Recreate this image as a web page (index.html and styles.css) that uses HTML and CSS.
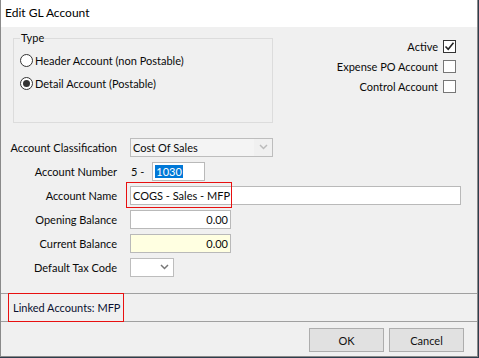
FILE: index.html
```html
<!DOCTYPE html>
<html>
<head>
<meta charset="utf-8">
<link rel="stylesheet" href="styles.css">
</head>
<body>
<div class="window">
  <div class="titlebar">Edit GL Account</div>
  <div class="top">
    <fieldset class="group">
      <legend>Type</legend>
      <label class="radio-row"><span class="radio"></span>Header Account (non Postable)</label>
      <label class="radio-row"><span class="radio checked"></span>Detail Account (Postable)</label>
    </fieldset>
    <div class="checks">
      <div class="check-row">Active<span class="check on"><svg width="11" height="11" viewBox="0 0 11 11"><path d="M1.5 5.5 L4.2 8.2 L9.5 1.8" fill="none" stroke="#222" stroke-width="1.6"/></svg></span></div>
      <div class="check-row">Expense PO Account<span class="check"></span></div>
      <div class="check-row">Control Account<span class="check"></span></div>
    </div>
  </div>
  <div class="form">
    <div class="row">
      <div class="lbl">Account Classification</div>
      <div class="select wide"><span class="sel-text">Cost Of Sales</span><span class="sel-arrow dim"><svg width="9" height="6" viewBox="0 0 9 6"><path d="M1 1 L4.5 4.5 L8 1" fill="none" stroke="#bbb" stroke-width="1.5"/></svg></span></div>
    </div>
    <div class="row">
      <div class="lbl">Account Number</div>
      <span class="prefix">5 -</span>
      <div class="input num"><span class="hl">1030</span></div>
    </div>
    <div class="row">
      <div class="lbl">Account Name</div>
      <div class="name-wrap">
        <div class="input name">COGS - Sales - MFP</div>
        <div class="red-box name-box"></div>
      </div>
    </div>
    <div class="row">
      <div class="lbl">Opening Balance</div>
      <div class="input money">0.00</div>
    </div>
    <div class="row">
      <div class="lbl">Current Balance</div>
      <div class="input money yellow">0.00</div>
    </div>
    <div class="row">
      <div class="lbl">Default Tax Code</div>
      <div class="select small"><span class="sel-text"></span><span class="sel-arrow"><svg width="9" height="6" viewBox="0 0 9 6"><path d="M1 1 L4.5 4.5 L8 1" fill="none" stroke="#777" stroke-width="1.5"/></svg></span></div>
    </div>
  </div>
  <div class="status">
    <div class="linked">Linked Accounts: MFP</div>
  </div>
  <div class="buttons">
    <button class="btn">OK</button>
    <button class="btn">Cancel</button>
  </div>
</div>
</body>
</html>
```

FILE: styles.css
```css
* { box-sizing: border-box; }
html, body { margin: 0; padding: 0; }
body {
  background: #2e3d4c;
  width: 479px;
  height: 358px;
  overflow: hidden;
  font-family: Lato, "Noto Sans", sans-serif;
  font-size: 11px;
  color: #0a0a0a;
  white-space: nowrap;
}
.window {
  width: 478px;
  height: 357px;
  background: #f0f0f0;
  border: 1px solid #8a8a8a;
  border-top: none;
  display: flex;
  flex-direction: column;
}
.titlebar {
  height: 27px;
  background: #fff;
  font-size: 12px;
  line-height: 26px;
  padding-left: 4px;
  color: #000;
  flex: none;
}
.top {
  display: flex;
  justify-content: space-between;
  padding-top: 4px;
  height: 107px;
  flex: none;
}
.group {
  margin: 0 0 0 12px;
  padding: 4px 0 0 6px;
  width: 260px;
  height: 92px;
  border: 1px solid #dcdcdc;
  min-width: 0;
}
.group legend {
  padding: 0 1px;
  margin-left: 0;
  font-size: 11px;
  line-height: 14px;
}
.radio-row {
  display: flex;
  align-items: center;
  height: 23px;
  gap: 2px;
}
.radio {
  width: 13px;
  height: 13px;
  border: 1px solid #333;
  border-radius: 50%;
  background: #fff;
  display: flex;
  align-items: center;
  justify-content: center;
  flex: none;
}
.radio.checked::after {
  content: "";
  width: 7px;
  height: 7px;
  border-radius: 50%;
  background: #333;
}
.checks {
  padding-top: 5px;
  padding-right: 21px;
  display: flex;
  flex-direction: column;
  align-items: flex-end;
}
.check-row {
  display: flex;
  align-items: center;
  height: 20px;
  gap: 5px;
}
.check {
  width: 13px;
  height: 13px;
  border: 1px solid #777;
  background: #fff;
  display: flex;
  align-items: center;
  justify-content: center;
}
.check.on { border-color: #333; }
.form {
  padding-top: 1px;
  height: 159px;
  flex: none;
}
.row {
  display: flex;
  align-items: center;
  height: 24px;
}
.lbl {
  width: 116px;
  text-align: right;
  margin-right: 13px;
  flex: none;
}
.select {
  display: flex;
  height: 19px;
  border: 1px solid #bdbdbd;
  background: #fff;
}
.select.wide { width: 143px; background: #f4f4f4; }
.select.small { width: 44px; }
.sel-text {
  flex: 1;
  padding-left: 2px;
  line-height: 17px;
}
.sel-arrow {
  width: 18px;
  display: flex;
  align-items: center;
  justify-content: center;
}
.sel-arrow.dim { background: #f0f0f0; }
.prefix { margin-right: 8px; margin-left: 1px; }
.input {
  height: 19px;
  border: 1px solid #b9b9b9;
  background: #fff;
  line-height: 17px;
  padding: 0 3px;
}
.input.num { width: 53px; padding-left: 2px; }
.hl { background: #0078d7; color: #fff; padding: 0 1px; }
.name-wrap { position: relative; }
.input.name { width: 331px; padding-left: 2px; }
.red-box {
  position: absolute;
  border: 1px solid #e81010;
  pointer-events: none;
}
.name-box { left: -4px; top: -4px; width: 106px; height: 26px; }
.input.money { width: 101px; text-align: right; padding-right: 2px; }
.input.yellow { background: #ffffe1; }
.status {
  position: relative;
  border-top: 1px solid #a0a0a0;
  border-bottom: 1px solid #a0a0a0;
  height: 29px;
  flex: none;
  padding-left: 7px;
}
.linked {
  position: absolute;
  left: 7px;
  top: -1px;
  width: 116px;
  height: 29px;
  border: 1px solid #e81010;
  line-height: 27px;
  padding-left: 4px;
  color: #0a1030;
}
.buttons {
  display: flex;
  justify-content: flex-end;
  gap: 5px;
  padding-top: 6px;
  padding-right: 13px;
}
.btn {
  width: 75px;
  height: 24px;
  background: #e1e1e1;
  border: 1px solid #adadad;
  font-family: inherit;
  font-size: 11px;
  color: #111;
  padding: 0;
}
```
